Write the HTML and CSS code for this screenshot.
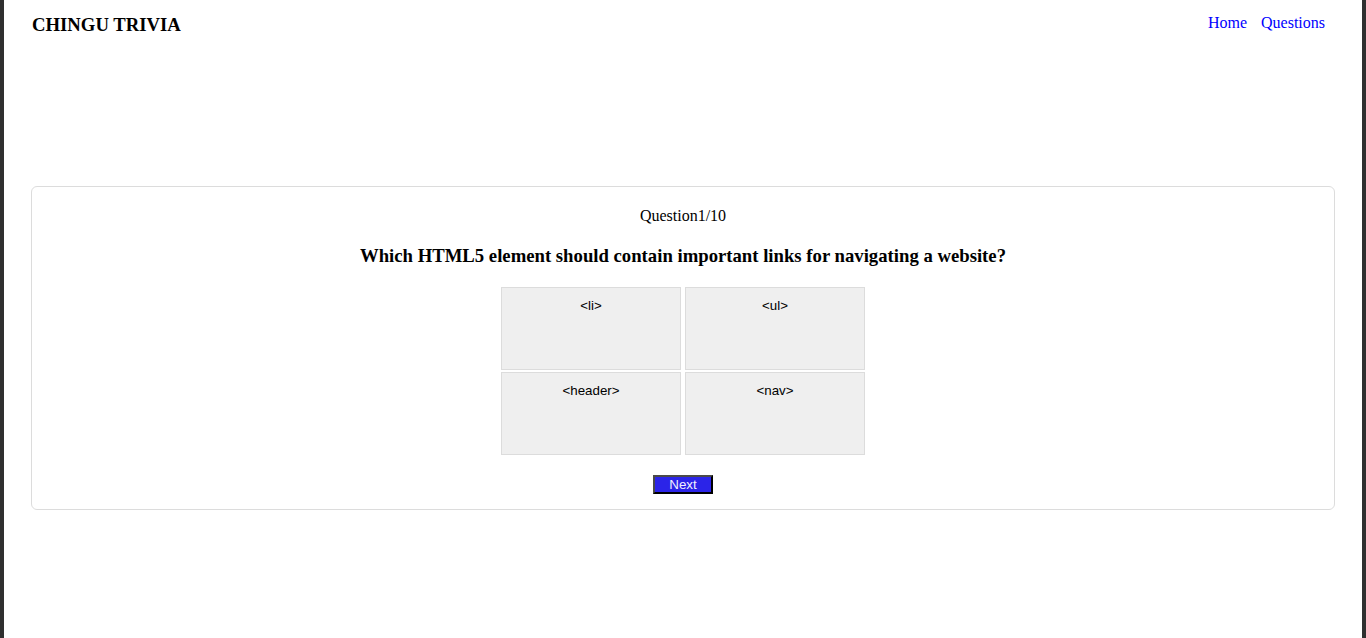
FILE: index.html
```html
<!DOCTYPE html>
<html lang="en">
<head>
<meta charset="utf-8">
<title>Chingu Trivia</title>
<link rel="stylesheet" href="styles.css">
</head>
<body>
<header class="topbar">
  <h3 class="brand">CHINGU TRIVIA</h3>
  <nav class="nav">
    <a class="nav-link" href="#">Home</a>
    <a class="nav-link" href="#">Questions</a>
  </nav>
</header>
<main class="card">
  <p class="counter">Question1/10</p>
  <h3 class="question">Which HTML5 element should contain important links for navigating a website?</h3>
  <div class="answers">
    <div class="answer">&lt;li&gt;</div>
    <div class="answer">&lt;ul&gt;</div>
    <div class="answer">&lt;header&gt;</div>
    <div class="answer">&lt;nav&gt;</div>
  </div>
  <button class="next" type="button">Next</button>
</main>
</body>
</html>
```

FILE: styles.css
```css
html {
  background: #2f2f2f;
  margin: 0;
  padding: 0;
}

body {
  margin: 0 4px;
  min-height: 638px;
  background: #fff;
  font-family: "Liberation Serif", "Times New Roman", serif;
  color: #000;
}

.topbar {
  display: flex;
  justify-content: space-between;
  align-items: flex-start;
  padding: 14px 37px 0 28px;
  height: 172px;
  box-sizing: border-box;
}

.brand {
  margin: 0;
  font-size: 18.72px;
  font-weight: bold;
  line-height: normal;
}

.nav {
  display: flex;
  gap: 14px;
}

.nav-link {
  color: #0000ee;
  color: blue;
  text-decoration: none;
  font-size: 16px;
  line-height: normal;
}

.card {
  display: block;
  margin: 14px 27px 0;
  border: 1px solid #dcdcdc;
  border-radius: 6px;
  padding: 20px 0 15px;
}

.counter {
  margin: 0;
  text-align: center;
  font-size: 16px;
  line-height: 18px;
}

.question {
  margin: 20px 0 0;
  text-align: center;
  font-size: 18.72px;
  font-weight: bold;
  line-height: 22px;
}

.answers {
  margin-top: 20px;
  display: grid;
  grid-template-columns: 180px 180px;
  grid-auto-rows: 83px;
  column-gap: 4px;
  row-gap: 2px;
  justify-content: center;
}

.answer {
  box-sizing: border-box;
  background: #efefef;
  border: 1px solid #dcdcdc;
  padding-top: 10px;
  text-align: center;
  font-family: "Liberation Sans", Arial, sans-serif;
  font-size: 13.33px;
  line-height: 15px;
}

.next {
  display: block;
  margin: 20px auto 0;
  width: 60px;
  height: 19px;
  padding: 0;
  box-sizing: border-box;
  background: #2b24e8;
  color: #f0f0ff;
  border: 2px solid;
  border-color: #4a4a4a #000 #000 #4a4a4a;
  font-family: "Liberation Sans", Arial, sans-serif;
  font-size: 13.33px;
  line-height: 15px;
}
```
